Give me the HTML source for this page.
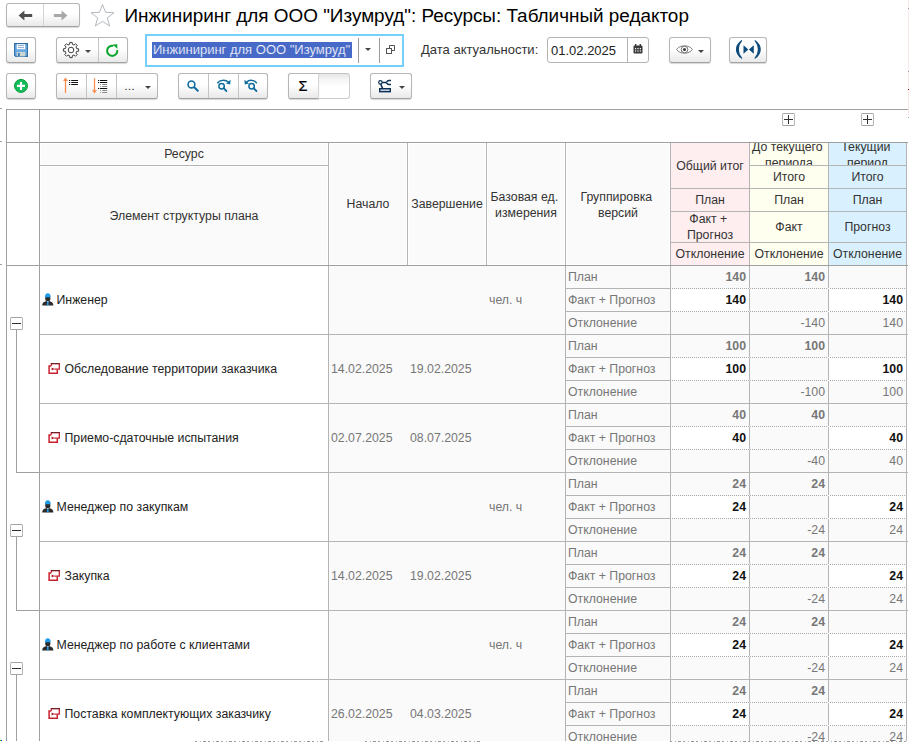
<!DOCTYPE html>
<html lang="ru"><head><meta charset="utf-8"><title>Табличный редактор</title>
<style>
*{box-sizing:border-box;margin:0;padding:0}
html,body{width:909px;height:742px;overflow:hidden;background:#fff}
body{position:relative;font-family:"Liberation Sans",sans-serif;font-size:12.3px;color:#333}
.a{position:absolute}
.btn{position:absolute;border:1px solid #b6b6b6;border-bottom-color:#a2a2a2;border-radius:3px;background:linear-gradient(#ffffff 45%,#e9e9e9);box-shadow:0 1px 1px rgba(0,0,0,.16)}
.dv{position:absolute;top:0;bottom:0;width:1px;background:#c4c4c4}
.t{position:absolute;white-space:nowrap;line-height:15px}
.hl{position:absolute;background:#a0a0a0;height:1px}
.vl{position:absolute;background:#a0a0a0;width:1px}
.il{background:#b4b4b4}
.dl{position:absolute;height:1px;background-image:linear-gradient(90deg,#a8a8a8 50%,rgba(255,255,255,0) 50%);background-size:2px 1px}
.c{position:absolute;display:flex;align-items:center;justify-content:center;text-align:center;overflow:hidden;line-height:15px;color:#333}
.g{color:#777}
.b{font-weight:bold}
.k{color:#111}
.num{position:absolute;text-align:right;white-space:nowrap;line-height:15px}
svg{position:absolute;overflow:visible}
</style></head>
<body>
<!-- navigation -->
<div class="btn" style="left:6px;top:3px;width:74px;height:24px"><div class="dv" style="left:36px;background:#d4d4d4"></div><svg style="left:10.5px;top:6px" width="15" height="11" viewBox="0 0 15 11"><path d="M0.6 5.5 L6.4 0.4 L6.4 4 L14.2 4 L14.2 7 L6.4 7 L6.4 10.6 Z" fill="#4e4e4e"/></svg><svg style="left:46.3px;top:6px" width="15" height="11" viewBox="0 0 15 11"><path d="M14.4 5.5 L8.6 0.4 L8.6 4 L0.8 4 L0.8 7 L8.6 7 L8.6 10.6 Z" fill="#a8a8a8"/></svg></div>
<svg style="left:90px;top:3px" width="25" height="24" viewBox="0 0 25 24"><path d="M12.5 1.4 L15.5 9.3 L24 9.7 L17.3 14.9 L19.6 23 L12.5 18.3 L5.4 23 L7.7 14.9 L1 9.7 L9.5 9.3 Z" fill="#fff" stroke="#b4b9c0" stroke-width="1"/></svg>
<div class="t" style="left:124.5px;top:4px;font-size:18.9px;line-height:24px;color:#000">Инжиниринг для ООО &quot;Изумруд&quot;: Ресурсы: Табличный редактор</div>
<div class="btn" style="left:6px;top:37px;width:30px;height:26px"><svg style="left:7px;top:5px" width="14" height="14" viewBox="0 0 14 14"><path d="M0.6 0.6 H13.4 V13.4 H1.8 L0.6 12.2 Z" fill="#6cabe3" stroke="#2e6da6" stroke-width="1.1"/><rect x="2.8" y="1.2" width="8.4" height="5" fill="#fff"/><path d="M4 2.6 H10 M4 4.6 H10" stroke="#7fa3c8" stroke-width="0.9"/><rect x="2.8" y="9" width="8.4" height="4.4" fill="#cdd5d0"/><rect x="4" y="10" width="1.7" height="3.2" fill="#2f77b8"/></svg></div>
<div class="btn" style="left:56px;top:37px;width:72px;height:26px"><div class="dv" style="left:41px"></div><svg style="left:5px;top:3px" width="18" height="18" viewBox="-9 -9 18 18"><path d="M-1.20 -7.61 L1.20 -7.61 L1.35 -5.64 L3.03 -4.95 L4.53 -6.23 L6.23 -4.53 L4.95 -3.03 L5.64 -1.35 L7.61 -1.20 L7.61 1.20 L5.64 1.35 L4.95 3.03 L6.23 4.53 L4.53 6.23 L3.03 4.95 L1.35 5.64 L1.20 7.61 L-1.20 7.61 L-1.35 5.64 L-3.03 4.95 L-4.53 6.23 L-6.23 4.53 L-4.95 3.03 L-5.64 1.35 L-7.61 1.20 L-7.61 -1.20 L-5.64 -1.35 L-4.95 -3.03 L-6.23 -4.53 L-4.53 -6.23 L-3.03 -4.95 L-1.35 -5.64 Z" fill="#fff" stroke="#3c3c3c" stroke-width="1" stroke-linejoin="round"/><circle r="2.8" fill="#fff" stroke="#3c3c3c" stroke-width="1"/></svg><svg style="left:28px;top:12px" width="6" height="3" viewBox="0 0 6 3"><path d="M0 0 H6 L3 3 Z" fill="#444"/></svg><svg style="left:48px;top:5.5px" width="14" height="14" viewBox="0 0 14 14"><path d="M8.5 1.85 A5.1 5.1 0 1 0 12.25 6.1" fill="none" stroke="#0aa52c" stroke-width="2"/><path d="M7.8 0.5 L12.3 0.2 L12.3 4.9 Z" fill="#0aa52c"/></svg></div>
<div class="a" style="left:145px;top:34px;width:259px;height:33px;border:2px solid #74d0fb;background:#fff"></div>
<div class="a" style="left:152px;top:42px;width:200px;height:16px;background:#4769c7"></div>
<div class="t" style="left:153px;top:42px;font-size:13px;line-height:16px;color:#fff;-webkit-text-stroke:0.2px #4769c7">Инжиниринг для ООО &quot;Изумруд&quot;</div>
<div class="vl" style="left:358px;top:38px;height:25px;background:#9a9a9a"></div>
<div class="vl" style="left:379px;top:38px;height:25px;background:#9a9a9a"></div>
<svg style="left:365px;top:48px" width="6" height="3" viewBox="0 0 6 3"><path d="M0 0 H6 L3 3 Z" fill="#444"/></svg>
<svg style="left:386px;top:45px" width="9" height="9" viewBox="0 0 9 9"><path d="M3.5 3 V0.5 H8.5 V5.5 H6" fill="none" stroke="#555" stroke-width="1"/><rect x="0.5" y="3.5" width="5" height="5" fill="#fff" stroke="#555" stroke-width="1"/></svg>
<div class="t" style="left:421px;top:42px;font-size:13px;line-height:16px;color:#333">Дата актуальности:</div>
<div class="a" style="left:547px;top:37px;width:102px;height:26px;border:1px solid #b4b4b4;border-radius:3px;background:#fff"></div>
<div class="vl" style="left:627px;top:38px;height:24px;background:#b4b4b4"></div>
<div class="t" style="left:551px;top:42.5px;font-size:13px;line-height:16px;color:#222">01.02.2025</div>
<svg style="left:633px;top:44px" width="10" height="10" viewBox="0 0 10 10"><rect x="0.5" y="1.5" width="9" height="8" rx="1" fill="#3a3a3a"/><rect x="2" y="0" width="1.4" height="2.4" fill="#3a3a3a"/><rect x="6.6" y="0" width="1.4" height="2.4" fill="#3a3a3a"/><g fill="#fff"><rect x="2" y="4" width="1.2" height="1.2"/><rect x="4.4" y="4" width="1.2" height="1.2"/><rect x="6.8" y="4" width="1.2" height="1.2"/><rect x="2" y="6.4" width="1.2" height="1.2"/><rect x="4.4" y="6.4" width="1.2" height="1.2"/><rect x="6.8" y="6.4" width="1.2" height="1.2"/></g></svg>
<div class="btn" style="left:669px;top:37px;width:42px;height:26px"><svg style="left:6px;top:6.4px" width="17" height="11" viewBox="0 0 17 11"><path d="M0.6 5.5 C3.5 0.6 13.5 0.6 16.4 5.5 C13.5 10.4 3.5 10.4 0.6 5.5 Z" fill="#fff" stroke="#858585" stroke-width="1"/><circle cx="8.5" cy="5.5" r="3.3" fill="#fff" stroke="#707070" stroke-width="1"/><circle cx="8.5" cy="5.5" r="1.5" fill="#333"/></svg><svg style="left:28px;top:12px" width="6" height="3" viewBox="0 0 6 3"><path d="M0 0 H6 L3 3 Z" fill="#444"/></svg></div>
<div class="btn" style="left:729px;top:37px;width:38px;height:26px"><svg style="left:5.8px;top:2.4px" width="27" height="19" viewBox="0 0 27 19"><path d="M5.6 0.7 C-1.2 5.8 -1.2 13 5.6 18.1 C1.2 13 1.2 5.8 5.6 0.7 Z" fill="#0b4a7a" stroke="#0b4a7a" stroke-width="1.1" stroke-linejoin="round"/><path d="M19.1 0.7 C25.9 5.8 25.9 13 19.1 18.1 C23.5 13 23.5 5.8 19.1 0.7 Z" fill="#0b4a7a" stroke="#0b4a7a" stroke-width="1.1" stroke-linejoin="round"/><path d="M7.5 5.2 L12.3 9.5 L7.5 13.8 Z M17.8 5.2 L12.9 9.5 L17.8 13.8 Z" fill="#0b4a7a"/></svg></div>
<div class="btn" style="left:6px;top:73px;width:30px;height:26px"><svg style="left:6px;top:4px" width="16" height="16" viewBox="0 0 16 16"><circle cx="8" cy="7.9" r="6.5" fill="#12bd5c" stroke="#0a9c34" stroke-width="1"/><path d="M8 3.9 V11.9 M4 7.9 H12" stroke="#fff" stroke-width="2.1"/></svg></div>
<div class="btn" style="left:56px;top:73px;width:102px;height:26px"><div class="dv" style="left:29px"></div><div class="dv" style="left:59px"></div><svg style="left:6px;top:3px" width="18" height="17" viewBox="0 0 18 17"><path d="M2.5 16 V2" stroke="#ff8a4e" stroke-width="1.3"/><path d="M0 4 L2.5 0.6 L5 4 Z" fill="#ff8a4e"/><path d="M6 3.5 H7.2 M8.2 3.5 H15 M6 5.5 H7.2 M8.2 5.5 H15 M6 7.5 H7.2 M8.2 7.5 H15" stroke="#111" stroke-width="1.1"/></svg><svg style="left:35px;top:3px" width="18" height="17" viewBox="0 0 18 17"><path d="M2.5 1.3 V15" stroke="#ff8a4e" stroke-width="1.3"/><path d="M0 13.2 L2.5 16.4 L5 13.2 Z" fill="#ff8a4e"/><path d="M6 3.5 H7.2 M8 3.5 H15.2 M6 5.5 H7.2 M8 5.5 H15.2 M6 11.5 H7.2 M8 11.5 H15.2" stroke="#111" stroke-width="1.1"/><path d="M8.2 7.5 H9 M10.2 7.5 H15.2 M8.2 9.5 H9 M10.2 9.5 H15.2 M8.2 13.5 H9 M10.2 13.5 H15.2 M8.2 15.5 H9 M10.2 15.5 H15.2" stroke="#8a8a8a" stroke-width="1"/></svg><div class="t" style="left:67.6px;top:5px;font-size:11px;color:#111;letter-spacing:0.4px;opacity:.99">...</div><svg style="left:88px;top:12px" width="6" height="3" viewBox="0 0 6 3"><path d="M0 0 H6 L3 3 Z" fill="#444"/></svg></div>
<div class="btn" style="left:178px;top:73px;width:90px;height:26px"><div class="dv" style="left:29px"></div><div class="dv" style="left:59px"></div><svg style="left:8px;top:6px" width="14" height="14" viewBox="0 0 14 14"><circle cx="4.45" cy="4.45" r="3.4" fill="none" stroke="#0f6c9c" stroke-width="1.6"/><path d="M7.2 7.2 L10.8 10.8" stroke="#0f6c9c" stroke-width="2" stroke-linecap="round"/></svg><svg style="left:37px;top:5px" width="16" height="15" viewBox="0 0 16 15"><circle cx="5.6" cy="7.2" r="2.7" fill="none" stroke="#0f6c9c" stroke-width="1.5"/><path d="M7.6 9.2 L10.4 12" stroke="#0f6c9c" stroke-width="1.8" stroke-linecap="round"/><path d="M1.4 4.4 C3.4 0.8 9.4 0.2 12.6 3.2" fill="none" stroke="#0f6c9c" stroke-width="1.4"/><path d="M14.6 0.8 L14.2 5.6 L10 4.6 Z" fill="#0f6c9c"/></svg><svg style="left:64px;top:5px" width="16" height="15" viewBox="0 0 16 15"><circle cx="8.6" cy="7.2" r="2.7" fill="none" stroke="#0f6c9c" stroke-width="1.5"/><path d="M10.6 9.2 L13.4 12" stroke="#0f6c9c" stroke-width="1.8" stroke-linecap="round"/><path d="M13.8 4.4 C11.8 0.8 6.4 0.2 3.4 3.2" fill="none" stroke="#0f6c9c" stroke-width="1.4"/><path d="M1.4 0.8 L1.8 5.6 L6 4.6 Z" fill="#0f6c9c"/></svg></div>
<div class="a" style="left:317px;top:73px;width:33px;height:26px;border:1px solid #cdcdcd;border-top-color:#c2c2c2;border-left:none;border-radius:0 3px 3px 0;background:linear-gradient(#e6e6e6,#f6f6f6 25%,#fff 50%)"></div>
<div class="btn" style="left:288px;top:73px;width:31px;height:26px;border-radius:3px 0 0 3px;border-right-color:#d6d6d6"><div class="t" style="left:9.5px;top:3.5px;font-size:14.5px;line-height:16px;color:#000;-webkit-text-stroke:0.2px #000">Σ</div></div>
<div class="btn" style="left:370px;top:73px;width:42px;height:26px"><svg style="left:6px;top:5px" width="15" height="14" viewBox="0 0 15 14"><rect x="2.7" y="9.7" width="10.6" height="3" fill="#c3ced9" stroke="#0c3156" stroke-width="1.4"/><path d="M3.4 4.4 L5.6 9.4 M4.8 3.4 H9.2" fill="none" stroke="#0c3156" stroke-width="1.5"/><path d="M14 1.5 H11.8 C10.2 1.5 9.8 3.4 8.8 3.4 C9.8 3.4 10.2 5.5 11.8 5.5 H14" fill="none" stroke="#0c3156" stroke-width="1.4"/><circle cx="3.4" cy="3.4" r="1.7" fill="#fff" stroke="#0c3156" stroke-width="1.2"/></svg><svg style="left:28px;top:12px" width="6" height="3" viewBox="0 0 6 3"><path d="M0 0 H6 L3 3 Z" fill="#444"/></svg></div>
<div class="a" style="left:40px;top:143px;width:630px;height:122px;background:#fafafa"></div>
<div class="a" style="left:329px;top:266px;width:577px;height:476px;background:#fafafa"></div>
<div class="a" style="left:40px;top:164px;width:288px;height:3px;background:#fff"></div>
<div class="a" style="left:327px;top:143px;width:3px;height:122px;background:#fff"></div>
<div class="a" style="left:406px;top:143px;width:3px;height:122px;background:#fff"></div>
<div class="a" style="left:485px;top:143px;width:3px;height:122px;background:#fff"></div>
<div class="a" style="left:564px;top:143px;width:3px;height:122px;background:#fff"></div>
<div class="a" style="left:40px;top:143px;width:630px;height:1px;background:#fff"></div>
<div class="a" style="left:40px;top:264px;width:630px;height:1px;background:#fff"></div>
<div class="a" style="left:40px;top:143px;width:1px;height:122px;background:#fff"></div>
<div class="a" style="left:669px;top:143px;width:1px;height:122px;background:#fff"></div>
<div class="a" style="left:671px;top:143px;width:78px;height:122px;background:#ffeef0"></div>
<div class="a" style="left:750px;top:143px;width:78px;height:122px;background:#fffff0"></div>
<div class="a" style="left:829px;top:143px;width:77px;height:122px;background:#d9f1fe"></div>
<div class="a" style="left:671px;top:289px;width:78px;height:23px;background:#fff"></div>
<div class="a" style="left:829px;top:289px;width:77px;height:23px;background:#fff"></div>
<div class="a" style="left:671px;top:358px;width:78px;height:23px;background:#fff"></div>
<div class="a" style="left:829px;top:358px;width:77px;height:23px;background:#fff"></div>
<div class="a" style="left:671px;top:427px;width:78px;height:23px;background:#fff"></div>
<div class="a" style="left:829px;top:427px;width:77px;height:23px;background:#fff"></div>
<div class="a" style="left:671px;top:496px;width:78px;height:23px;background:#fff"></div>
<div class="a" style="left:829px;top:496px;width:77px;height:23px;background:#fff"></div>
<div class="a" style="left:671px;top:565px;width:78px;height:23px;background:#fff"></div>
<div class="a" style="left:829px;top:565px;width:77px;height:23px;background:#fff"></div>
<div class="a" style="left:671px;top:634px;width:78px;height:23px;background:#fff"></div>
<div class="a" style="left:829px;top:634px;width:77px;height:23px;background:#fff"></div>
<div class="a" style="left:671px;top:703px;width:78px;height:23px;background:#fff"></div>
<div class="a" style="left:829px;top:703px;width:77px;height:23px;background:#fff"></div>
<div class="hl il" style="left:40px;top:165px;width:288px"></div>
<div class="hl il" style="left:749px;top:165px;width:158px"></div>
<div class="hl il" style="left:670px;top:188px;width:237px"></div>
<div class="hl il" style="left:670px;top:211px;width:237px"></div>
<div class="hl il" style="left:670px;top:242px;width:237px"></div>
<div class="vl il" style="left:328px;top:142px;height:600px"></div>
<div class="vl il" style="left:565px;top:142px;height:600px"></div>
<div class="vl il" style="left:670px;top:142px;height:600px"></div>
<div class="vl il" style="left:749px;top:142px;height:600px"></div>
<div class="vl il" style="left:828px;top:142px;height:600px"></div>
<div class="vl il" style="left:906px;top:142px;height:600px"></div>
<div class="vl il" style="left:407px;top:142px;height:123px"></div>
<div class="vl il" style="left:486px;top:142px;height:123px"></div>
<div class="hl" style="left:6px;top:109px;width:902px"></div>
<div class="hl" style="left:6px;top:142px;width:902px"></div>
<div class="hl" style="left:6px;top:265px;width:902px"></div>
<div class="vl" style="left:6px;top:109px;height:633px"></div>
<div class="vl" style="left:39px;top:109px;height:633px"></div>
<div class="c " style="left:40px;top:143px;width:288px;height:22px;"><span style="position:relative;top:0px">Ресурс</span></div>
<div class="c " style="left:40px;top:166px;width:288px;height:99px;"><span style="position:relative;top:1px">Элемент структуры плана</span></div>
<div class="c " style="left:329px;top:143px;width:78px;height:122px;"><span style="position:relative;top:0px">Начало</span></div>
<div class="c " style="left:408px;top:143px;width:78px;height:122px;"><span style="position:relative;top:0px">Завершение</span></div>
<div class="c " style="left:487px;top:143px;width:78px;height:122px;"><span style="display:block;position:relative;top:1px;line-height:16px"><span style="display:block;position:relative;left:-1.7px">Базовая ед.</span><span style="display:block">измерения</span></span></div>
<div class="c " style="left:566px;top:143px;width:104px;height:122px;"><span style="display:block;position:relative;top:1px;line-height:16px"><span style="display:block;position:relative;left:-1.7px">Группировка</span><span style="display:block">версий</span></span></div>
<div class="c " style="left:671px;top:143px;width:78px;height:45px;"><span style="position:relative;top:1px">Общий итог</span></div>
<div class="c " style="left:671px;top:189px;width:78px;height:22px;"><span style="position:relative;top:0px">План</span></div>
<div class="c " style="left:671px;top:212px;width:78px;height:30px;"><span style="display:block;position:relative;top:0px;line-height:16px"><span style="display:block;position:relative;left:-1.7px">Факт +</span><span style="display:block">Прогноз</span></span></div>
<div class="c " style="left:671px;top:243px;width:78px;height:22px;"><span style="position:relative;top:0px">Отклонение</span></div>
<div class="c " style="left:750px;top:143px;width:78px;height:22px;"><span style="display:block;position:relative;top:1px;line-height:16px"><span style="display:block;position:relative;left:-1.7px">До текущего</span><span style="display:block">периода</span></span></div>
<div class="c " style="left:750px;top:166px;width:78px;height:22px;"><span style="position:relative;top:0px">Итого</span></div>
<div class="c " style="left:750px;top:189px;width:78px;height:22px;"><span style="position:relative;top:0px">План</span></div>
<div class="c " style="left:750px;top:212px;width:78px;height:30px;"><span style="position:relative;top:0px">Факт</span></div>
<div class="c " style="left:750px;top:243px;width:78px;height:22px;"><span style="position:relative;top:0px">Отклонение</span></div>
<div class="c " style="left:829px;top:143px;width:77px;height:22px;"><span style="display:block;position:relative;top:1px;line-height:16px"><span style="display:block;position:relative;left:-1.7px">Текущий</span><span style="display:block">период</span></span></div>
<div class="c " style="left:829px;top:166px;width:77px;height:22px;"><span style="position:relative;top:0px">Итого</span></div>
<div class="c " style="left:829px;top:189px;width:77px;height:22px;"><span style="position:relative;top:0px">План</span></div>
<div class="c " style="left:829px;top:212px;width:77px;height:30px;"><span style="position:relative;top:0px">Прогноз</span></div>
<div class="c " style="left:829px;top:243px;width:77px;height:22px;"><span style="position:relative;top:0px">Отклонение</span></div>
<div class="a" style="left:782px;top:113px;width:13px;height:13px;border:1px solid #b4b4b4;border-top-color:#a4a4a4;border-bottom-color:#a4a4a4;border-radius:1.5px;background:#fff"><div class="a" style="left:1px;top:5px;width:9px;height:1px;background:#303030"></div><div class="a" style="left:5px;top:1px;width:1px;height:9px;background:#303030"></div></div>
<div class="a" style="left:861px;top:113px;width:13px;height:13px;border:1px solid #b4b4b4;border-top-color:#a4a4a4;border-bottom-color:#a4a4a4;border-radius:1.5px;background:#fff"><div class="a" style="left:1px;top:5px;width:9px;height:1px;background:#303030"></div><div class="a" style="left:5px;top:1px;width:1px;height:9px;background:#303030"></div></div>
<div class="hl il" style="left:565px;top:288px;width:105px"></div>
<div class="dl" style="left:672px;top:288px;width:236px"></div>
<div class="a" style="left:749px;top:288px;width:1px;height:1px;background:#fff"></div>
<div class="a" style="left:828px;top:288px;width:1px;height:1px;background:#fff"></div>
<div class="hl il" style="left:565px;top:311px;width:105px"></div>
<div class="dl" style="left:672px;top:311px;width:236px"></div>
<div class="a" style="left:749px;top:311px;width:1px;height:1px;background:#fff"></div>
<div class="a" style="left:828px;top:311px;width:1px;height:1px;background:#fff"></div>
<svg style="left:41.7px;top:292.7px" width="11.6" height="12.6" viewBox="0 0 12 13"><path d="M0.2 13 C0.2 10 1.8 9.2 4.4 8.3 L6 9.6 L7.6 8.3 C10.2 9.2 11.8 10 11.8 13 Z" fill="#2b2b2b"/><ellipse cx="6" cy="5.6" rx="2.7" ry="3" fill="#2b2b2b"/><path d="M3 4.5 C3 1.4 4.2 0.2 6 0.2 C7.8 0.2 9 1.4 9 4.5 Z" fill="#1e9be9"/><path d="M5.3 9 L6.7 9 L6.9 12 L6 13 L5.1 12 Z" fill="#1e9be9"/></svg>
<div class="t" style="left:56.5px;top:293px;color:#222">Инженер</div>
<div class="t g" style="left:489px;top:293px">чел. ч</div>
<div class="t g" style="left:568px;top:270px">План</div>
<div class="t g" style="left:568px;top:293px">Факт + Прогноз</div>
<div class="t g" style="left:568px;top:316px">Отклонение</div>
<div class="num g b" style="left:676px;top:269.5px;width:70px">140</div>
<div class="num g b" style="left:755px;top:269.5px;width:70px">140</div>
<div class="num b k" style="left:676px;top:292.5px;width:70px">140</div>
<div class="num b k" style="left:833px;top:292.5px;width:70px">140</div>
<div class="num g" style="left:755px;top:315.5px;width:70px">-140</div>
<div class="num g" style="left:833px;top:315.5px;width:70px">140</div>
<div class="hl il" style="left:40px;top:334px;width:868px"></div>
<div class="hl il" style="left:565px;top:357px;width:105px"></div>
<div class="dl" style="left:672px;top:357px;width:236px"></div>
<div class="a" style="left:749px;top:357px;width:1px;height:1px;background:#fff"></div>
<div class="a" style="left:828px;top:357px;width:1px;height:1px;background:#fff"></div>
<div class="hl il" style="left:565px;top:380px;width:105px"></div>
<div class="dl" style="left:672px;top:380px;width:236px"></div>
<div class="a" style="left:749px;top:380px;width:1px;height:1px;background:#fff"></div>
<div class="a" style="left:828px;top:380px;width:1px;height:1px;background:#fff"></div>
<svg style="left:48px;top:363px" width="12" height="11" viewBox="0 0 12 11"><path d="M3.2 3.1 H1.1 V10.2 H9.3 V6.6" fill="none" stroke="#c8202c" stroke-width="1.5"/><path d="M3.4 2.8 V0.7 H11.3 V6.1 H6.4" fill="none" stroke="#c8202c" stroke-width="1.3"/><path d="M2.8 0.6 H11.9" stroke="#6a2226" stroke-width="1.1"/><path d="M3.6 4.4 L6.6 6 L3.6 7.6 Z" fill="#a81824"/></svg>
<div class="t" style="left:64.5px;top:362px;color:#222">Обследование территории заказчика</div>
<div class="t g" style="left:331px;top:362px">14.02.2025</div>
<div class="t g" style="left:410px;top:362px">19.02.2025</div>
<div class="t g" style="left:568px;top:339px">План</div>
<div class="t g" style="left:568px;top:362px">Факт + Прогноз</div>
<div class="t g" style="left:568px;top:385px">Отклонение</div>
<div class="num g b" style="left:676px;top:338.5px;width:70px">100</div>
<div class="num g b" style="left:755px;top:338.5px;width:70px">100</div>
<div class="num b k" style="left:676px;top:361.5px;width:70px">100</div>
<div class="num b k" style="left:833px;top:361.5px;width:70px">100</div>
<div class="num g" style="left:755px;top:384.5px;width:70px">-100</div>
<div class="num g" style="left:833px;top:384.5px;width:70px">100</div>
<div class="hl il" style="left:40px;top:403px;width:868px"></div>
<div class="hl il" style="left:565px;top:426px;width:105px"></div>
<div class="dl" style="left:672px;top:426px;width:236px"></div>
<div class="a" style="left:749px;top:426px;width:1px;height:1px;background:#fff"></div>
<div class="a" style="left:828px;top:426px;width:1px;height:1px;background:#fff"></div>
<div class="hl il" style="left:565px;top:449px;width:105px"></div>
<div class="dl" style="left:672px;top:449px;width:236px"></div>
<div class="a" style="left:749px;top:449px;width:1px;height:1px;background:#fff"></div>
<div class="a" style="left:828px;top:449px;width:1px;height:1px;background:#fff"></div>
<svg style="left:48px;top:432px" width="12" height="11" viewBox="0 0 12 11"><path d="M3.2 3.1 H1.1 V10.2 H9.3 V6.6" fill="none" stroke="#c8202c" stroke-width="1.5"/><path d="M3.4 2.8 V0.7 H11.3 V6.1 H6.4" fill="none" stroke="#c8202c" stroke-width="1.3"/><path d="M2.8 0.6 H11.9" stroke="#6a2226" stroke-width="1.1"/><path d="M3.6 4.4 L6.6 6 L3.6 7.6 Z" fill="#a81824"/></svg>
<div class="t" style="left:64.5px;top:431px;color:#222">Приемо-сдаточные испытания</div>
<div class="t g" style="left:331px;top:431px">02.07.2025</div>
<div class="t g" style="left:410px;top:431px">08.07.2025</div>
<div class="t g" style="left:568px;top:408px">План</div>
<div class="t g" style="left:568px;top:431px">Факт + Прогноз</div>
<div class="t g" style="left:568px;top:454px">Отклонение</div>
<div class="num g b" style="left:676px;top:407.5px;width:70px">40</div>
<div class="num g b" style="left:755px;top:407.5px;width:70px">40</div>
<div class="num b k" style="left:676px;top:430.5px;width:70px">40</div>
<div class="num b k" style="left:833px;top:430.5px;width:70px">40</div>
<div class="num g" style="left:755px;top:453.5px;width:70px">-40</div>
<div class="num g" style="left:833px;top:453.5px;width:70px">40</div>
<div class="hl il" style="left:40px;top:472px;width:868px"></div>
<div class="hl il" style="left:565px;top:495px;width:105px"></div>
<div class="dl" style="left:672px;top:495px;width:236px"></div>
<div class="a" style="left:749px;top:495px;width:1px;height:1px;background:#fff"></div>
<div class="a" style="left:828px;top:495px;width:1px;height:1px;background:#fff"></div>
<div class="hl il" style="left:565px;top:518px;width:105px"></div>
<div class="dl" style="left:672px;top:518px;width:236px"></div>
<div class="a" style="left:749px;top:518px;width:1px;height:1px;background:#fff"></div>
<div class="a" style="left:828px;top:518px;width:1px;height:1px;background:#fff"></div>
<svg style="left:41.7px;top:499.7px" width="11.6" height="12.6" viewBox="0 0 12 13"><path d="M0.2 13 C0.2 10 1.8 9.2 4.4 8.3 L6 9.6 L7.6 8.3 C10.2 9.2 11.8 10 11.8 13 Z" fill="#2b2b2b"/><ellipse cx="6" cy="5.6" rx="2.7" ry="3" fill="#2b2b2b"/><path d="M3 4.5 C3 1.4 4.2 0.2 6 0.2 C7.8 0.2 9 1.4 9 4.5 Z" fill="#1e9be9"/><path d="M5.3 9 L6.7 9 L6.9 12 L6 13 L5.1 12 Z" fill="#1e9be9"/></svg>
<div class="t" style="left:56.5px;top:500px;color:#222">Менеджер по закупкам</div>
<div class="t g" style="left:489px;top:500px">чел. ч</div>
<div class="t g" style="left:568px;top:477px">План</div>
<div class="t g" style="left:568px;top:500px">Факт + Прогноз</div>
<div class="t g" style="left:568px;top:523px">Отклонение</div>
<div class="num g b" style="left:676px;top:476.5px;width:70px">24</div>
<div class="num g b" style="left:755px;top:476.5px;width:70px">24</div>
<div class="num b k" style="left:676px;top:499.5px;width:70px">24</div>
<div class="num b k" style="left:833px;top:499.5px;width:70px">24</div>
<div class="num g" style="left:755px;top:522.5px;width:70px">-24</div>
<div class="num g" style="left:833px;top:522.5px;width:70px">24</div>
<div class="hl il" style="left:40px;top:541px;width:868px"></div>
<div class="hl il" style="left:565px;top:564px;width:105px"></div>
<div class="dl" style="left:672px;top:564px;width:236px"></div>
<div class="a" style="left:749px;top:564px;width:1px;height:1px;background:#fff"></div>
<div class="a" style="left:828px;top:564px;width:1px;height:1px;background:#fff"></div>
<div class="hl il" style="left:565px;top:587px;width:105px"></div>
<div class="dl" style="left:672px;top:587px;width:236px"></div>
<div class="a" style="left:749px;top:587px;width:1px;height:1px;background:#fff"></div>
<div class="a" style="left:828px;top:587px;width:1px;height:1px;background:#fff"></div>
<svg style="left:48px;top:570px" width="12" height="11" viewBox="0 0 12 11"><path d="M3.2 3.1 H1.1 V10.2 H9.3 V6.6" fill="none" stroke="#c8202c" stroke-width="1.5"/><path d="M3.4 2.8 V0.7 H11.3 V6.1 H6.4" fill="none" stroke="#c8202c" stroke-width="1.3"/><path d="M2.8 0.6 H11.9" stroke="#6a2226" stroke-width="1.1"/><path d="M3.6 4.4 L6.6 6 L3.6 7.6 Z" fill="#a81824"/></svg>
<div class="t" style="left:64.5px;top:569px;color:#222">Закупка</div>
<div class="t g" style="left:331px;top:569px">14.02.2025</div>
<div class="t g" style="left:410px;top:569px">19.02.2025</div>
<div class="t g" style="left:568px;top:546px">План</div>
<div class="t g" style="left:568px;top:569px">Факт + Прогноз</div>
<div class="t g" style="left:568px;top:592px">Отклонение</div>
<div class="num g b" style="left:676px;top:545.5px;width:70px">24</div>
<div class="num g b" style="left:755px;top:545.5px;width:70px">24</div>
<div class="num b k" style="left:676px;top:568.5px;width:70px">24</div>
<div class="num b k" style="left:833px;top:568.5px;width:70px">24</div>
<div class="num g" style="left:755px;top:591.5px;width:70px">-24</div>
<div class="num g" style="left:833px;top:591.5px;width:70px">24</div>
<div class="hl il" style="left:40px;top:610px;width:868px"></div>
<div class="hl il" style="left:565px;top:633px;width:105px"></div>
<div class="dl" style="left:672px;top:633px;width:236px"></div>
<div class="a" style="left:749px;top:633px;width:1px;height:1px;background:#fff"></div>
<div class="a" style="left:828px;top:633px;width:1px;height:1px;background:#fff"></div>
<div class="hl il" style="left:565px;top:656px;width:105px"></div>
<div class="dl" style="left:672px;top:656px;width:236px"></div>
<div class="a" style="left:749px;top:656px;width:1px;height:1px;background:#fff"></div>
<div class="a" style="left:828px;top:656px;width:1px;height:1px;background:#fff"></div>
<svg style="left:41.7px;top:637.7px" width="11.6" height="12.6" viewBox="0 0 12 13"><path d="M0.2 13 C0.2 10 1.8 9.2 4.4 8.3 L6 9.6 L7.6 8.3 C10.2 9.2 11.8 10 11.8 13 Z" fill="#2b2b2b"/><ellipse cx="6" cy="5.6" rx="2.7" ry="3" fill="#2b2b2b"/><path d="M3 4.5 C3 1.4 4.2 0.2 6 0.2 C7.8 0.2 9 1.4 9 4.5 Z" fill="#1e9be9"/><path d="M5.3 9 L6.7 9 L6.9 12 L6 13 L5.1 12 Z" fill="#1e9be9"/></svg>
<div class="t" style="left:56.5px;top:638px;color:#222">Менеджер по работе с клиентами</div>
<div class="t g" style="left:489px;top:638px">чел. ч</div>
<div class="t g" style="left:568px;top:615px">План</div>
<div class="t g" style="left:568px;top:638px">Факт + Прогноз</div>
<div class="t g" style="left:568px;top:661px">Отклонение</div>
<div class="num g b" style="left:676px;top:614.5px;width:70px">24</div>
<div class="num g b" style="left:755px;top:614.5px;width:70px">24</div>
<div class="num b k" style="left:676px;top:637.5px;width:70px">24</div>
<div class="num b k" style="left:833px;top:637.5px;width:70px">24</div>
<div class="num g" style="left:755px;top:660.5px;width:70px">-24</div>
<div class="num g" style="left:833px;top:660.5px;width:70px">24</div>
<div class="hl il" style="left:40px;top:679px;width:868px"></div>
<div class="hl il" style="left:565px;top:702px;width:105px"></div>
<div class="dl" style="left:672px;top:702px;width:236px"></div>
<div class="a" style="left:749px;top:702px;width:1px;height:1px;background:#fff"></div>
<div class="a" style="left:828px;top:702px;width:1px;height:1px;background:#fff"></div>
<div class="hl il" style="left:565px;top:725px;width:105px"></div>
<div class="dl" style="left:672px;top:725px;width:236px"></div>
<div class="a" style="left:749px;top:725px;width:1px;height:1px;background:#fff"></div>
<div class="a" style="left:828px;top:725px;width:1px;height:1px;background:#fff"></div>
<svg style="left:48px;top:708px" width="12" height="11" viewBox="0 0 12 11"><path d="M3.2 3.1 H1.1 V10.2 H9.3 V6.6" fill="none" stroke="#c8202c" stroke-width="1.5"/><path d="M3.4 2.8 V0.7 H11.3 V6.1 H6.4" fill="none" stroke="#c8202c" stroke-width="1.3"/><path d="M2.8 0.6 H11.9" stroke="#6a2226" stroke-width="1.1"/><path d="M3.6 4.4 L6.6 6 L3.6 7.6 Z" fill="#a81824"/></svg>
<div class="t" style="left:64.5px;top:707px;color:#222">Поставка комплектующих заказчику</div>
<div class="t g" style="left:331px;top:707px">26.02.2025</div>
<div class="t g" style="left:410px;top:707px">04.03.2025</div>
<div class="t g" style="left:568px;top:684px">План</div>
<div class="t g" style="left:568px;top:707px">Факт + Прогноз</div>
<div class="t g" style="left:568px;top:730px">Отклонение</div>
<div class="num g b" style="left:676px;top:683.5px;width:70px">24</div>
<div class="num g b" style="left:755px;top:683.5px;width:70px">24</div>
<div class="num b k" style="left:676px;top:706.5px;width:70px">24</div>
<div class="num b k" style="left:833px;top:706.5px;width:70px">24</div>
<div class="num g" style="left:755px;top:729.5px;width:70px">-24</div>
<div class="num g" style="left:833px;top:729.5px;width:70px">24</div>
<div class="vl" style="left:16px;top:330px;height:142px"></div>
<div class="hl" style="left:16px;top:472px;width:23px"></div>
<div class="a" style="left:10px;top:317px;width:13px;height:13px;border:1px solid #b4b4b4;border-top-color:#a4a4a4;border-bottom-color:#a4a4a4;border-radius:1.5px;background:#fff"><div class="a" style="left:1px;top:5px;width:9px;height:1px;background:#303030"></div></div>
<div class="vl" style="left:16px;top:537px;height:73px"></div>
<div class="hl" style="left:16px;top:610px;width:23px"></div>
<div class="a" style="left:10px;top:524px;width:13px;height:13px;border:1px solid #b4b4b4;border-top-color:#a4a4a4;border-bottom-color:#a4a4a4;border-radius:1.5px;background:#fff"><div class="a" style="left:1px;top:5px;width:9px;height:1px;background:#303030"></div></div>
<div class="vl" style="left:16px;top:675px;height:125px"></div>
<div class="a" style="left:10px;top:662px;width:13px;height:13px;border:1px solid #b4b4b4;border-top-color:#a4a4a4;border-bottom-color:#a4a4a4;border-radius:1.5px;background:#fff"><div class="a" style="left:1px;top:5px;width:9px;height:1px;background:#303030"></div></div>
<div class="a" style="left:908px;top:0;width:1px;height:115px;background:#fde6e6"></div>
<div class="a" style="left:908px;top:8px;width:1px;height:1px;background:#9a9a9a"></div>
<div class="a" style="left:908px;top:71px;width:1px;height:1px;background:#9a9a9a"></div>
<div class="a" style="left:908px;top:89px;width:1px;height:1px;background:#8b1a1a"></div>
<div class="a" style="left:908px;top:117px;width:1px;height:1px;background:#9a9a9a"></div>
<div class="a" style="left:0;top:741px;width:909px;height:1px;background:#fff"></div>
<div class="a" style="left:195px;top:741px;width:130px;height:1px;opacity:.55;background-image:linear-gradient(90deg,#555 0 2px,#fff 2px 5px,#777 5px 6px,#fff 6px 8px,#444 8px 11px,#fff 11px 13px);background-size:13px 1px"></div>
<div class="a" style="left:365px;top:741px;width:115px;height:1px;opacity:.55;background-image:linear-gradient(90deg,#555 0 2px,#fff 2px 5px,#777 5px 6px,#fff 6px 8px,#444 8px 11px,#fff 11px 13px);background-size:13px 1px"></div>
<div class="a" style="left:670px;top:741px;width:239px;height:1px;opacity:.55;background-image:linear-gradient(90deg,#555 0 2px,#fff 2px 5px,#777 5px 6px,#fff 6px 8px,#444 8px 11px,#fff 11px 13px);background-size:13px 1px"></div>
<div class="a" style="left:0;top:740px;width:1px;height:1px;background:#00e800"></div>
<div class="a" style="left:1px;top:740px;width:1px;height:1px;background:#1010ff"></div>
<div class="a" style="left:0;top:108px;width:2px;height:1px;background:#a0a0a0"></div>
<div class="a" style="left:0;top:141px;width:2px;height:1px;background:#a0a0a0"></div>
<div class="a" style="left:0;top:264px;width:2px;height:1px;background:#a0a0a0"></div>
</body></html>
